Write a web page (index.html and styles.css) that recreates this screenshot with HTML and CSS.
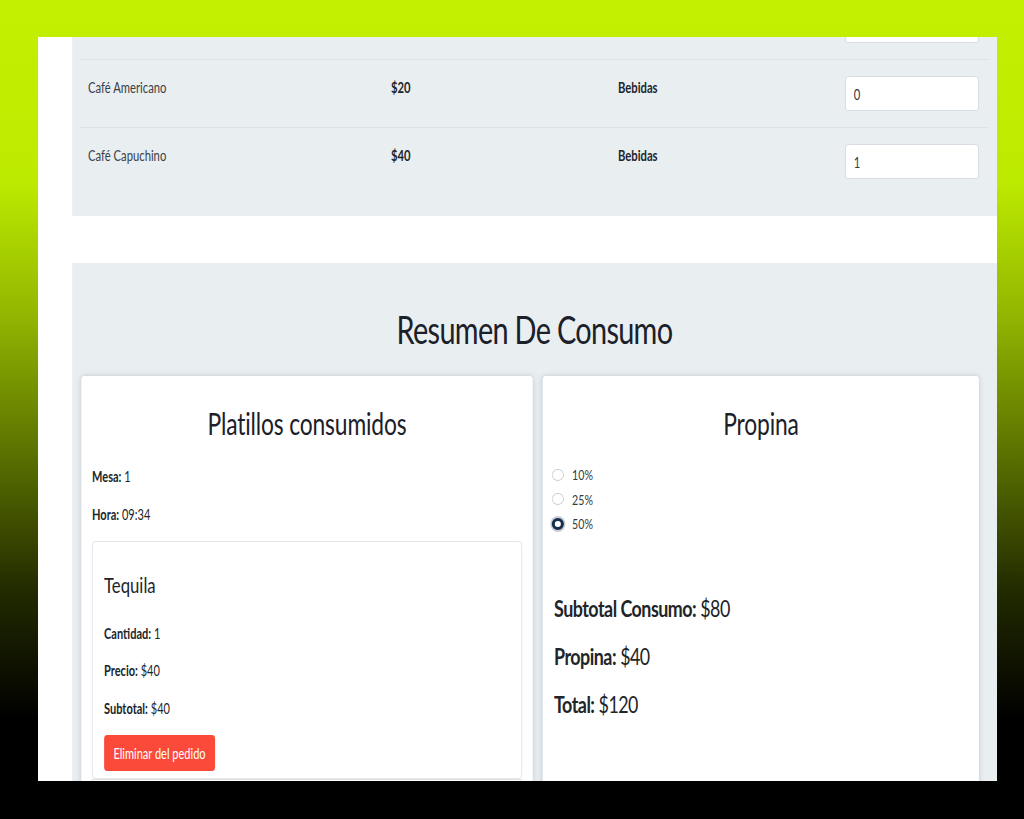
FILE: index.html
```html
<!DOCTYPE html>
<html lang="es">
<head>
<meta charset="utf-8">
<title>Resumen De Consumo</title>
<link rel="stylesheet" href="styles.css">
</head>
<body>
<div class="frame">
  <div class="page">
    <section class="menu">
      <table class="menu-table">
        <tbody>
          <tr class="first">
            <td class="c-name"></td>
            <td class="c-price"></td>
            <td class="c-cat"></td>
            <td class="c-qty"><input class="qty" type="number" value="1" aria-label="Cantidad"></td>
          </tr>
          <tr>
            <td class="c-name">Café Americano</td>
            <td class="c-price">$20</td>
            <td class="c-cat">Bebidas</td>
            <td class="c-qty"><input class="qty" type="number" value="0" aria-label="Cantidad"></td>
          </tr>
          <tr>
            <td class="c-name">Café Capuchino</td>
            <td class="c-price">$40</td>
            <td class="c-cat">Bebidas</td>
            <td class="c-qty"><input class="qty" type="number" value="1" aria-label="Cantidad"></td>
          </tr>
        </tbody>
      </table>
    </section>

    <section class="summary">
      <h1 class="summary-title">Resumen De Consumo</h1>
      <div class="cards">
        <div class="card">
          <h2 class="card-title">Platillos consumidos</h2>
          <p class="info"><strong>Mesa:</strong> 1</p>
          <p class="info"><strong>Hora:</strong> 09:34</p>
          <div class="item">
            <h3 class="item-title">Tequila</h3>
            <p class="info"><strong>Cantidad:</strong> 1</p>
            <p class="info"><strong>Precio:</strong> $40</p>
            <p class="info"><strong>Subtotal:</strong> $40</p>
            <button class="btn-delete" type="button">Eliminar del pedido</button>
          </div>
          <div class="item item-next"></div>
        </div>
        <div class="card">
          <h2 class="card-title">Propina</h2>
          <div class="tips">
            <label class="tip"><input class="radio" type="radio" name="propina" value="10"> 10%</label>
            <label class="tip"><input class="radio" type="radio" name="propina" value="25"> 25%</label>
            <label class="tip"><input class="radio" type="radio" name="propina" value="50" checked> 50%</label>
          </div>
          <div class="totals">
            <p class="total-line"><strong>Subtotal Consumo:</strong> $80</p>
            <p class="total-line"><strong>Propina:</strong> $40</p>
            <p class="total-line"><strong>Total:</strong> $120</p>
          </div>
        </div>
      </div>
    </section>
  </div>
</div>
</body>
</html>
```

FILE: styles.css
```css
* { box-sizing: border-box; }

html, body {
  margin: 0;
  height: 819px;
  overflow: hidden;
}

body {
  background: linear-gradient(to bottom, #c3f000 0%, #bdeb00 22%, #93b800 38%, #5c7300 55%, #222b00 72%, #000 88%);
  font-family: Lato, "Open Sans", sans-serif;
  color: #212529;
  padding: 37px 27px 0 38px;
}

.frame {
  width: 959px;
  height: 744px;
  background: #fff;
  overflow: hidden;
}

/* the captured page is horizontally compressed in the screenshot */
.page {
  width: 1261.8px;
  padding-left: 44.7px;
  margin-top: -65px;
  transform: scaleX(0.76);
  transform-origin: 0 0;
}

/* ---------- menu table ---------- */
.menu {
  background: #e9eef1;
  padding: 20px 11.8px 21px 10.6px;
}

.menu-table {
  width: 100%;
  border-collapse: collapse;
  table-layout: fixed;
  font-size: 14.8px;
  line-height: 22px;
}

.menu-table td {
  padding: 16px 10.5px 18px;
  vertical-align: top;
  border-top: 1px solid #dce2e5;
}

.menu-table td.c-qty { padding-bottom: 16px; }

.menu-table tr.first td { border-top: 0; }

.c-name { width: 398.6px; color: #3a4046; }
.c-price { width: 298.7px; font-weight: 700; }
.c-cat { width: 298.7px; font-weight: 700; }
.c-qty { width: 198.7px; }

.qty {
  display: block;
  width: 176.3px;
  height: 35px;
  border: 1px solid #d3d9de;
  border-radius: 4px;
  background: #fff;
  padding: 0 10.5px;
  font-family: Lato, sans-serif;
  font-size: 14.8px;
  color: #343a40;
  -moz-appearance: textfield;
  appearance: textfield;
}
.qty::-webkit-inner-spin-button,
.qty::-webkit-outer-spin-button { -webkit-appearance: none; margin: 0; }

/* ---------- summary ---------- */
.summary {
  margin-top: 47px;
  background: #e9eef1;
  padding: 42.6px 11.9px 40px;
}

.summary-title {
  margin: 0 0 23.4px;
  text-align: center;
  font-size: 38px;
  letter-spacing: -0.9px;
  line-height: 47px;
  font-weight: 400;
  color: #1b2029;
}

.cards {
  display: grid;
  grid-template-columns: 594.7px 573.7px;
  column-gap: 13.2px;
  justify-content: start;
  align-items: start;
}

.card {
  background: #fff;
  border-radius: 4px;
  padding: 11px 14.5px;
  box-shadow: 0 0 6px rgba(120, 130, 140, 0.35);
  min-height: 520px;
}

.card-title {
  margin: 17.7px 0 25.6px;
  text-align: center;
  font-size: 30px;
  letter-spacing: -0.2px;
  line-height: 36px;
  font-weight: 400;
  color: #1b2029;
}

.info {
  margin: 0 0 16px;
  font-size: 14.5px;
  line-height: 21.6px;
}

.info strong { font-weight: 700; }

.item {
  border: 1px solid #dfe3e6;
  border-radius: 4px;
  padding: 13.5px 14.8px 7px;
}

.item-next {
  border-top: 1px solid #dfe3e6;
  min-height: 60px;
  border-radius: 0;
}

.item-title {
  margin: 15.6px 0 24.6px;
  font-size: 22px;
  line-height: 26.4px;
  font-weight: 400;
}

.btn-delete {
  display: block;
  width: 146px;
  height: 35.5px;
  padding: 0;
  border: 0;
  border-radius: 4px;
  background: #fb4a3a;
  color: #fff;
  font-family: Lato, sans-serif;
  font-size: 14.5px;
  text-align: center;
}

/* tips */
.tips {
  margin-top: -4px;
  display: flex;
  flex-direction: column;
}

.tip {
  display: flex;
  align-items: center;
  gap: 11px;
  height: 24.5px;
  font-size: 14px;
  color: #343a40;
}

.radio {
  appearance: none;
  -webkit-appearance: none;
  margin: 0 0 0 -3px;
  width: 15.8px;
  height: 12px;
  border-radius: 50%;
  border: 1px solid #c9ced2;
  background: #fff;
  flex: none;
}

.radio:checked {
  border-width: 3.5px 4.6px;
  border-color: #163049;
  box-shadow: 0 0 0 2px #c8cfd5;
}

.totals { margin-top: 58.2px; }

.total-line {
  margin: 0 0 19.2px;
  font-size: 23.5px;
  letter-spacing: -0.65px;
  line-height: 29px;
}

.total-line strong { font-weight: 700; }
```
